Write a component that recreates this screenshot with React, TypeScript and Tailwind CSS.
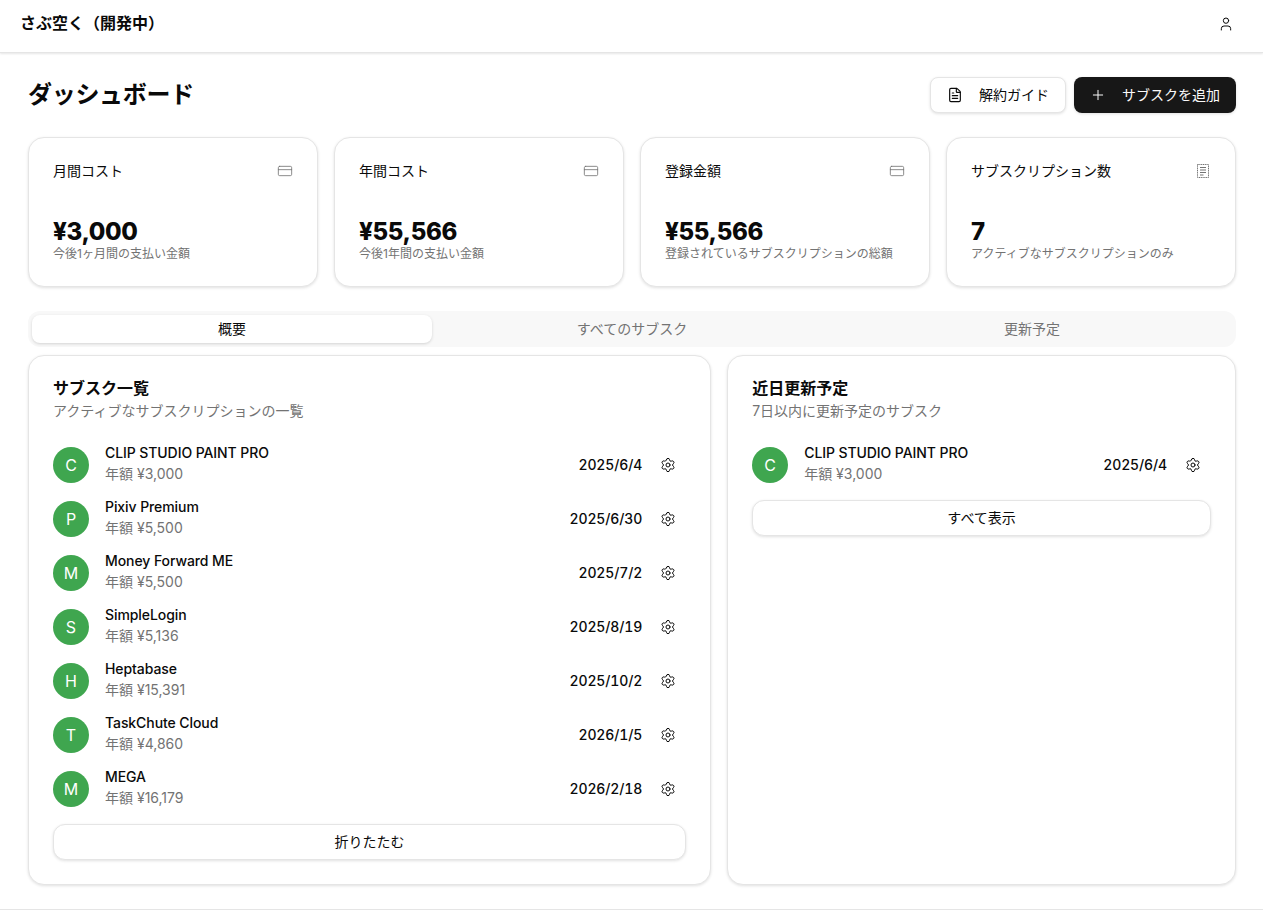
import { CreditCard, FileText, Plus, Settings, User } from "lucide-react";

const subs = [
    { letter: "C", name: "CLIP STUDIO PAINT PRO", amount: "年額 ¥3,000", date: "2025/6/4" },
    { letter: "P", name: "Pixiv Premium", amount: "年額 ¥5,500", date: "2025/6/30" },
    { letter: "M", name: "Money Forward ME", amount: "年額 ¥5,500", date: "2025/7/2" },
    { letter: "S", name: "SimpleLogin", amount: "年額 ¥5,136", date: "2025/8/19" },
    { letter: "H", name: "Heptabase", amount: "年額 ¥15,391", date: "2025/10/2" },
    { letter: "T", name: "TaskChute Cloud", amount: "年額 ¥4,860", date: "2026/1/5" },
    { letter: "M", name: "MEGA", amount: "年額 ¥16,179", date: "2026/2/18" },
];

const stats = [
    { title: "月間コスト", value: "¥3,000", note: "今後1ヶ月間の支払い金額", icon: "card" },
    { title: "年間コスト", value: "¥55,566", note: "今後1年間の支払い金額", icon: "card" },
    { title: "登録金額", value: "¥55,566", note: "登録されているサブスクリプションの総額", icon: "card" },
    { title: "サブスクリプション数", value: "7", note: "アクティブなサブスクリプションのみ", icon: "receipt" },
];

function ReceiptIcon() {
    return (
        <svg width="16" height="16" viewBox="0 0 16 16" fill="none" stroke="#737373" strokeWidth="1">
            <path d="M2.5 1.5h11v13h-11z" strokeDasharray="1.2 0.6" />
            <path d="M5 4.500h6M5 7h6M5 9.500h6M5 12h3.500" />
        </svg>
    );
}

function SubRow(props: { sub: (typeof subs)[number] }) {
    const { sub } = props;
    return (
        <div className="flex items-center justify-between h-[42px]">
            <div className="flex items-center gap-4">
                <div className="flex h-9 w-9 items-center justify-center rounded-full bg-[#3fa64f] text-base text-white">
                    {sub.letter}
                </div>
                <div className="pb-1">
                    <p className="text-sm leading-[21px] font-medium tracking-[-0.08px] text-[#0a0a0a]">{sub.name}</p>
                    <p className="text-sm leading-[21px] text-[#737373]">{sub.amount}</p>
                </div>
            </div>
            <div className="flex items-center gap-2">
                <span className="text-sm font-medium tracking-[-0.13px] text-[#0a0a0a] tabular-nums">{sub.date}</span>
                <button className="flex h-9 w-9 items-center justify-center text-[#0a0a0a]">
                    <Settings size={16} strokeWidth={1.5} />
                </button>
            </div>
        </div>
    );
}

function WideButton(props: { label: string }) {
    return (
        <button className="h-9 w-full rounded-xl border border-[#e5e5e5] bg-white text-sm text-[#0a0a0a] shadow-[0_1px_3px_rgba(0,0,0,0.12)]">
            {props.label}
        </button>
    );
}

export default function App() {
    return (
        <div className="min-h-[913px] bg-white font-['Inter','Noto_Sans_CJK_JP',sans-serif] text-[#0a0a0a]">
            <header className="flex h-[53px] items-center justify-between border-b border-[#e5e5e5] pr-[29px] pb-1 pl-5 shadow-[0_1px_2px_rgba(0,0,0,0.1)]">
                <span className="-mt-0.5 text-base font-semibold">さぶ空く（開発中）</span>
                <User size={16} strokeWidth={1.5} />
            </header>

            <main className="border-b border-[#e5e5e5] pt-6 pr-[27px] pb-6 pl-7">
                <div className="flex h-9 items-center justify-between">
                    <h1 className="text-2xl font-bold tracking-[-0.3px]">ダッシュボード</h1>
                    <div className="flex gap-2">
                        <button className="flex h-9 w-[136px] items-center justify-center gap-4 rounded-lg border border-[#e5e5e5] bg-white text-sm shadow-[0_1px_3px_rgba(0,0,0,0.12)]">
                            <FileText size={16} strokeWidth={1.75} />
                            解約ガイド
                        </button>
                        <button className="flex h-9 w-[162px] items-center justify-center gap-4 rounded-lg bg-[#171717] text-sm text-[#fafafa] shadow-[0_1px_3px_rgba(0,0,0,0.12)]">
                            <Plus size={16} strokeWidth={1.5} />
                            サブスクを追加
                        </button>
                    </div>
                </div>

                <div className="mt-6 grid grid-cols-4 gap-4">
                    {stats.map((s) => (
                        <div key={s.title} className="h-[150px] rounded-2xl border border-[#e5e5e5] bg-white px-6 pt-[23px] shadow-[0_1px_3px_rgba(0,0,0,0.12)]">
                            <div className="flex h-5 items-center justify-between">
                                <span className="text-sm">{s.title}</span>
                                {s.icon === "card" ? <CreditCard size={16} strokeWidth={1.25} className="text-[#737373]" /> : <ReceiptIcon />}
                            </div>
                            <p className="mt-[37px] text-2xl leading-7 font-extrabold tracking-[-0.35px]">{s.value}</p>
                            <p className="text-xs leading-4 text-[#737373]">{s.note}</p>
                        </div>
                    ))}
                </div>

                <div className="mt-6 flex h-9 items-center rounded-xl bg-[#f8f8f8] p-1">
                    <div className="flex h-7 flex-1 items-center justify-center rounded-lg bg-white text-sm shadow-[0_1px_3px_rgba(0,0,0,0.15)]">概要</div>
                    <div className="flex h-7 flex-1 items-center justify-center text-sm text-[#737373]">すべてのサブスク</div>
                    <div className="flex h-7 flex-1 items-center justify-center text-sm text-[#737373]">更新予定</div>
                </div>

                <div className="mt-2 grid grid-cols-[683.2px_1fr] gap-4">
                    <section className="h-[530px] rounded-2xl border border-[#e5e5e5] bg-white px-6 pt-[22px] shadow-[0_1px_3px_rgba(0,0,0,0.12)]">
                        <h2 className="text-base leading-5 font-semibold">サブスク一覧</h2>
                        <p className="mt-[3px] text-sm leading-5 text-[#737373]">アクティブなサブスクリプションの一覧</p>
                        <div className="mt-[23px] flex flex-col gap-3">
                            {subs.map((s) => (
                                <SubRow key={s.name} sub={s} />
                            ))}
                        </div>
                        <div className="mt-3.5">
                            <WideButton label="折りたたむ" />
                        </div>
                    </section>
                    <section className="h-[530px] rounded-2xl border border-[#e5e5e5] bg-white px-6 pt-[22px] shadow-[0_1px_3px_rgba(0,0,0,0.12)]">
                        <h2 className="text-base leading-5 font-semibold">近日更新予定</h2>
                        <p className="mt-[3px] text-sm leading-5 text-[#737373]">7日以内に更新予定のサブスク</p>
                        <div className="mt-[23px]">
                            <SubRow sub={subs[0]!} />
                        </div>
                        <div className="mt-3.5">
                            <WideButton label="すべて表示" />
                        </div>
                    </section>
                </div>
            </main>
        </div>
    );
}
